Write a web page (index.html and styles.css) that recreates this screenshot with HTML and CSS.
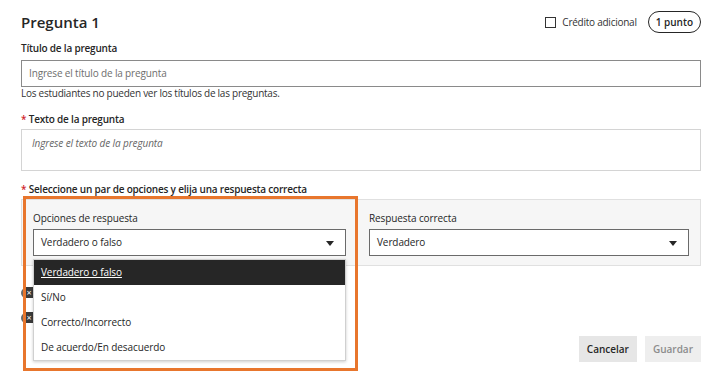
FILE: index.html
```html
<!DOCTYPE html>
<html lang="es">
<head>
    <meta charset="UTF-8">
    <meta name="viewport" content="width=device-width, initial-scale=1.0">
    <title>Pregunta 1</title>
    <link rel="stylesheet" href="styles.css">
</head>
<body>
    <main class="editor">
        <header class="question-head">
            <h1>Pregunta 1</h1>
            <div class="head-tools">
                <label class="extra"><span class="box"></span>Crédito adicional</label>
                <span class="points">1 punto</span>
            </div>
        </header>

        <div class="field field-title">
            <div class="label">Título de la pregunta</div>
            <div class="input">Ingrese el título de la pregunta</div>
            <p class="hint">Los estudiantes no pueden ver los títulos de las preguntas.</p>
        </div>

        <div class="field field-text">
            <div class="label"><span class="req">*</span> Texto de la pregunta</div>
            <div class="textarea">Ingrese el texto de la pregunta</div>
        </div>

        <section class="answers">
            <div class="label"><span class="req">*</span> Seleccione un par de opciones y elija una respuesta correcta</div>
            <div class="answer-panel">
                <div class="col">
                    <div class="sub-label">Opciones de respuesta</div>
                    <div class="select-wrap">
                        <div class="select">Verdadero o falso<span class="caret"></span></div>
                        <ul class="menu">
                            <li class="active"><span>Verdadero o falso</span></li>
                            <li>Sí/No</li>
                            <li>Correcto/Incorrecto</li>
                            <li>De acuerdo/En desacuerdo</li>
                        </ul>
                    </div>
                </div>
                <div class="col">
                    <div class="sub-label">Respuesta correcta</div>
                    <div class="select">Verdadero<span class="caret"></span></div>
                </div>
            </div>
            <div class="option-rows">
                <div class="opt-row"><span class="remove"><span>×</span></span></div>
                <div class="opt-row"><span class="remove"><span>×</span></span></div>
            </div>
            <div class="highlight"></div>
        </section>

        <footer class="actions">
            <button class="btn">Cancelar</button>
            <button class="btn disabled">Guardar</button>
        </footer>
    </main>
</body>
</html>
```

FILE: styles.css
```css
body {
    margin: 0;
    font-family: "Open Sans", "Noto Sans", sans-serif;
    color: #262626;
    background: #fff;
}
.editor { padding: 11px 24px 26px 21px; }

.question-head {
    display: flex;
    justify-content: space-between;
    align-items: center;
    height: 22px;
}
.question-head h1 {
    margin: 0;
    font-size: 15px;
    font-weight: 600;
}
.head-tools { display: flex; align-items: center; }
.extra {
    display: flex;
    align-items: center;
    font-size: 10px;
    letter-spacing: -0.25px;
    color: #333;
}
.extra .box {
    width: 9px;
    height: 9px;
    border: 1px solid #333;
    margin-right: 6px;
}
.points {
    margin-left: 11px;
    height: 20px;
    padding: 0 7px;
    border: 1px solid #262626;
    border-radius: 11px;
    font-size: 10px;
    font-weight: 600;
    line-height: 20px;
}

.label {
    font-size: 10px;
    font-weight: 600;
    line-height: 14px;
    letter-spacing: -0.2px;
}
.req { color: #d0262c; }
.field-title { margin-top: 8px; }
.input {
    margin-top: 5px;
    height: 25px;
    border: 1px solid #8a8a8a;
    padding: 0 7px;
    font-size: 10px;
    letter-spacing: -0.15px;
    line-height: 25px;
    color: #6e6e6e;
}
.hint {
    margin: 0;
    font-size: 10px;
    letter-spacing: -0.25px;
    line-height: 12px;
    color: #333;
}
.field-text { margin-top: 13px; }
.textarea {
    margin-top: 3px;
    height: 42px;
    box-sizing: border-box;
    border: 1px solid #d4d4d4;
    padding: 6px 10px 0;
    font-size: 10px;
    letter-spacing: -0.1px;
    font-style: italic;
    color: #666;
}

.answers { position: relative; margin-top: 11px; }
.answer-panel {
    margin-top: 3px;
    display: grid;
    grid-template-columns: 313px 1fr;
    gap: 23px;
    padding: 11px 11px 9px;
    background: #f6f6f6;
    border: 1px solid #e0e0e0;
}
.sub-label {
    font-size: 10px;
    letter-spacing: -0.1px;
    line-height: 14px;
    margin-bottom: 4px;
}
.select-wrap { position: relative; }
.select {
    position: relative;
    height: 25px;
    border: 1px solid #6a6a6a;
    background: #fff;
    padding: 0 7px;
    font-size: 10px;
    letter-spacing: -0.1px;
    line-height: 25px;
}
.caret {
    position: absolute;
    right: 11px;
    top: 11px;
    border-left: 4px solid transparent;
    border-right: 4px solid transparent;
    border-top: 5px solid #262626;
}
.menu {
    position: absolute;
    top: 30px;
    left: 0;
    right: 0;
    margin: 0;
    padding: 0;
    list-style: none;
    background: #fff;
    border: 1px solid #d0d0d0;
    box-shadow: 0 1px 3px rgba(0, 0, 0, 0.2);
    z-index: 2;
}
.menu li {
    height: 25px;
    padding: 0 7px;
    font-size: 10px;
    letter-spacing: -0.1px;
    line-height: 25px;
}
.menu li.active {
    background: #262626;
    color: #fff;
}
.menu li.active span { text-decoration: underline; }

.option-rows { padding-top: 14px; }
.opt-row { height: 25px; display: flex; align-items: center; }
.remove {
    position: relative;
    width: 10px;
    height: 10px;
    border-radius: 50%;
    background: #6a6a6a;
}
.remove span {
    position: absolute;
    left: 4px;
    top: -1px;
    width: 8px;
    height: 11px;
    background: #3a3a3a;
    color: #fff;
    font-size: 9px;
    line-height: 11px;
    text-align: center;
}
.highlight {
    position: absolute;
    left: 2px;
    top: 14px;
    width: 329px;
    height: 169px;
    border: 3px solid #e8762d;
    pointer-events: none;
    z-index: 3;
}

.actions {
    display: flex;
    justify-content: flex-end;
    gap: 8px;
    margin-top: 6px;
}
.btn {
    height: 26px;
    padding: 0 8px;
    border: none;
    background: #e6e6e6;
    font-family: inherit;
    font-size: 10px;
    font-weight: 600;
    color: #262626;
}
.btn.disabled { background: #eeeeee; color: #8c8c8c; }
```
